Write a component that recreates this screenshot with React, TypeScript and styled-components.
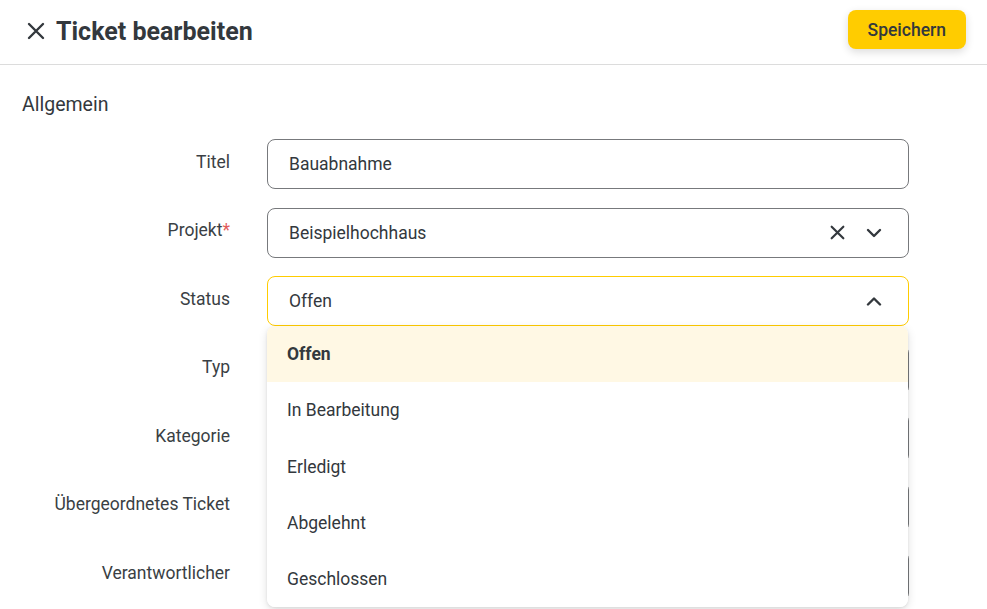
import styled, { createGlobalStyle } from 'styled-components';

const GlobalStyle = createGlobalStyle`
  body {
    margin: 0;
    background: #ffffff;
    font-family: Roboto, 'Noto Sans', sans-serif;
    color: #33383d;
  }
`;

const Page = styled.div`
  width: 987px;
  height: 609px;
  overflow: hidden;
  background: #ffffff;
`;

const Header = styled.header`
  display: flex;
  align-items: center;
  justify-content: space-between;
  box-sizing: border-box;
  height: 65px;
  padding: 0 21px 5px 27px;
  border-bottom: 1px solid #dcdcdc;
`;

const TitleGroup = styled.div`
  display: flex;
  align-items: center;
  gap: 11px;
  padding-top: 3px;
`;

const CloseButton = styled.button`
  display: flex;
  padding: 0;
  border: none;
  background: none;
  color: #33383d;
  cursor: pointer;
`;

const Title = styled.h1`
  margin: 0;
  font-size: 25px;
  font-weight: 700;
  color: #33383d;
`;

const SaveButton = styled.button`
  height: 39px;
  padding: 0 20px;
  border: none;
  border-radius: 8px;
  background: #ffcc00;
  color: #33383d;
  font-family: Roboto, sans-serif;
  font-size: 17.5px;
  font-weight: 500;
  box-shadow: 0 3px 8px rgba(0, 0, 0, 0.14);
  cursor: pointer;
`;

const Section = styled.section`
  padding: 28px 0 0 22px;
`;

const SectionTitle = styled.h2`
  margin: 0 0 22px;
  font-size: 19.5px;
  line-height: 24px;
  font-weight: 400;
  color: #33383d;
`;

const Form = styled.div`
  display: grid;
  grid-template-columns: 208px 642px;
  column-gap: 37px;
  row-gap: 18.6px;
`;

const Label = styled.label`
  padding-top: 10.5px;
  text-align: right;
  font-size: 17.5px;
  line-height: 24px;
  color: #3a3f44;
`;

const Required = styled.span`
  color: #e25b5b;
`;

const FieldWrap = styled.div`
  position: relative;
`;

const Field = styled.div<{ $focused?: boolean }>`
  display: flex;
  align-items: center;
  box-sizing: border-box;
  height: 50px;
  padding: 0 26px 0 21px;
  border: 1px solid ${(p) => (p.$focused ? '#ffcc00' : '#77797c')};
  border-radius: 8px;
  background: #ffffff;
  font-size: 17.5px;
  color: #33383d;
`;

const Value = styled.span`
  flex: 1;
`;

const IconSlot = styled.span`
  display: flex;
  align-items: center;
  gap: 21px;
  color: #33383d;
`;

const Menu = styled.ul`
  position: absolute;
  top: 100%;
  left: 0;
  right: 1px;
  z-index: 5;
  margin: 0;
  padding: 0;
  list-style: none;
  background: #ffffff;
  border-radius: 8px;
  overflow: hidden;
  box-shadow: 0 3px 10px rgba(0, 0, 0, 0.12), 0 1px 3px rgba(0, 0, 0, 0.08);
`;

const Option = styled.li<{ $selected?: boolean }>`
  display: flex;
  align-items: center;
  height: 56.2px;
  padding: 0 20px;
  font-size: 17.5px;
  font-weight: ${(p) => (p.$selected ? 700 : 400)};
  background: ${(p) => (p.$selected ? '#fff8e4' : '#ffffff')};
  color: #33383d;
`;

function CrossIcon({ size = 18, stroke = 2.4 }: { size?: number; stroke?: number }) {
  return (
    <svg width={size} height={size} viewBox="0 0 18 18" fill="none">
      <path d="M2 2L16 16M16 2L2 16" stroke="currentColor" strokeWidth={stroke} strokeLinecap="round" />
    </svg>
  );
}

function Chevron({ up }: { up?: boolean }) {
  return (
    <svg width="16" height="10" viewBox="0 0 16 10" fill="none">
      <path
        d={up ? 'M2 8.5L8 2.5L14 8.5' : 'M2 2L8 8L14 2'}
        stroke="currentColor"
        strokeWidth="2.4"
        strokeLinecap="round"
        strokeLinejoin="round"
      />
    </svg>
  );
}

const statusOptions = ['Offen', 'In Bearbeitung', 'Erledigt', 'Abgelehnt', 'Geschlossen'];

export default function App() {
  const status = 'Offen';

  return (
    <Page>
      <GlobalStyle />
      <Header>
        <TitleGroup>
          <CloseButton type="button">
            <CrossIcon />
          </CloseButton>
          <Title>Ticket bearbeiten</Title>
        </TitleGroup>
        <SaveButton type="button">Speichern</SaveButton>
      </Header>

      <Section>
        <SectionTitle>Allgemein</SectionTitle>
        <Form>
          <Label>Titel</Label>
          <Field>
            <Value>Bauabnahme</Value>
          </Field>

          <Label>
            Projekt<Required>*</Required>
          </Label>
          <Field>
            <Value>Beispielhochhaus</Value>
            <IconSlot>
              <CrossIcon size={15} stroke={2.6} />
              <Chevron />
            </IconSlot>
          </Field>

          <Label>Status</Label>
          <FieldWrap>
            <Field $focused>
              <Value>{status}</Value>
              <IconSlot>
                <Chevron up />
              </IconSlot>
            </Field>
            <Menu>
              {statusOptions.map((opt) => (
                <Option key={opt} $selected={opt === status}>
                  {opt}
                </Option>
              ))}
            </Menu>
          </FieldWrap>

          <Label>Typ</Label>
          <Field />

          <Label>Kategorie</Label>
          <Field />

          <Label>Übergeordnetes Ticket</Label>
          <Field />

          <Label>Verantwortlicher</Label>
          <Field />
        </Form>
      </Section>
    </Page>
  );
}
